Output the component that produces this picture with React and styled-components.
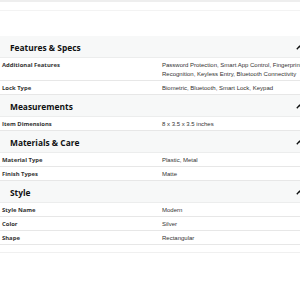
import React from "react";
import styled, { createGlobalStyle } from "styled-components";

const sections = [
    {
        title: "Features & Specs",
        rows: [
            ["Additional Features", "Password Protection, Smart App Control, Fingerprint Recognition, Keyless Entry, Bluetooth Connectivity"],
            ["Lock Type", "Biometric, Bluetooth, Smart Lock, Keypad"],
        ],
    },
    { title: "Measurements", rows: [["Item Dimensions", "8 x 3.5 x 3.5 inches"]] },
    {
        title: "Materials & Care",
        rows: [
            ["Material Type", "Plastic, Metal"],
            ["Finish Types", "Matte"],
        ],
    },
    {
        title: "Style",
        rows: [
            ["Style Name", "Modern"],
            ["Color", "Silver"],
            ["Shape", "Rectangular"],
        ],
    },
];

const Chevron = () => (
    <svg width="7" height="5" viewBox="0 0 7 5">
        <polyline points="0.8,4.2 3.5,1.2 6.2,4.2" fill="none" stroke="#0f1111" strokeWidth="1.3" />
    </svg>
);

const App = () => (
    <>
        <GlobalStyle />
        <Page>
            <TopEdge />
            <Table>
                {sections.map(section => (
                    <Section key={section.title}>
                        <Header>
                            <Title>{section.title}</Title>
                            <Chevron />
                        </Header>
                        {section.rows.map(([label, value]) => (
                            <Row key={label}>
                                <Label>{label}</Label>
                                <Value>{value}</Value>
                            </Row>
                        ))}
                    </Section>
                ))}
                <Foot />
            </Table>
        </Page>
    </>
);

export default App;

const GlobalStyle = createGlobalStyle`
    html, body {
        margin: 0;
        padding: 0;
        background: #fff;
        overflow: hidden;
    }
`;

const Page = styled.div`
    width: 306px;
`;

const TopEdge = styled.div`
    height: 8px;
    border-top: 2px solid #eeeeee;
    border-bottom: 1px solid #f3f3f3;
    margin-bottom: 25px;
`;

const Table = styled.div`
    display: flex;
    flex-direction: column;
`;

const Section = styled.section`
    display: flex;
    flex-direction: column;
`;

const Header = styled.div`
    height: 22px;
    box-sizing: border-box;
    display: flex;
    align-items: center;
    justify-content: space-between;
    padding: 1px 3px 0 10px;
    background: #f7f8f8;
    border-bottom: 1px solid #eceded;
`;

const Title = styled.h2`
    margin: 0;
    font-family: "Open Sans", sans-serif;
    font-weight: 700;
    font-size: 8.4px;
    color: #0f1111;
`;

const Row = styled.div`
    display: grid;
    grid-template-columns: 160px 1fr;
    padding: 3px 2px 1px 2px;
    border-bottom: 1px solid #e7e7e7;
    line-height: 9px;
`;

const Label = styled.div`
    font-family: "Open Sans", sans-serif;
    font-weight: 700;
    font-size: 5.9px;
    color: #333;
`;

const Value = styled.div`
    font-family: "Liberation Sans", Arial, sans-serif;
    font-size: 6px;
    color: #333;
`;

const Foot = styled.div`
    height: 7px;
    border-bottom: 1px solid #f0f0f0;
`;
